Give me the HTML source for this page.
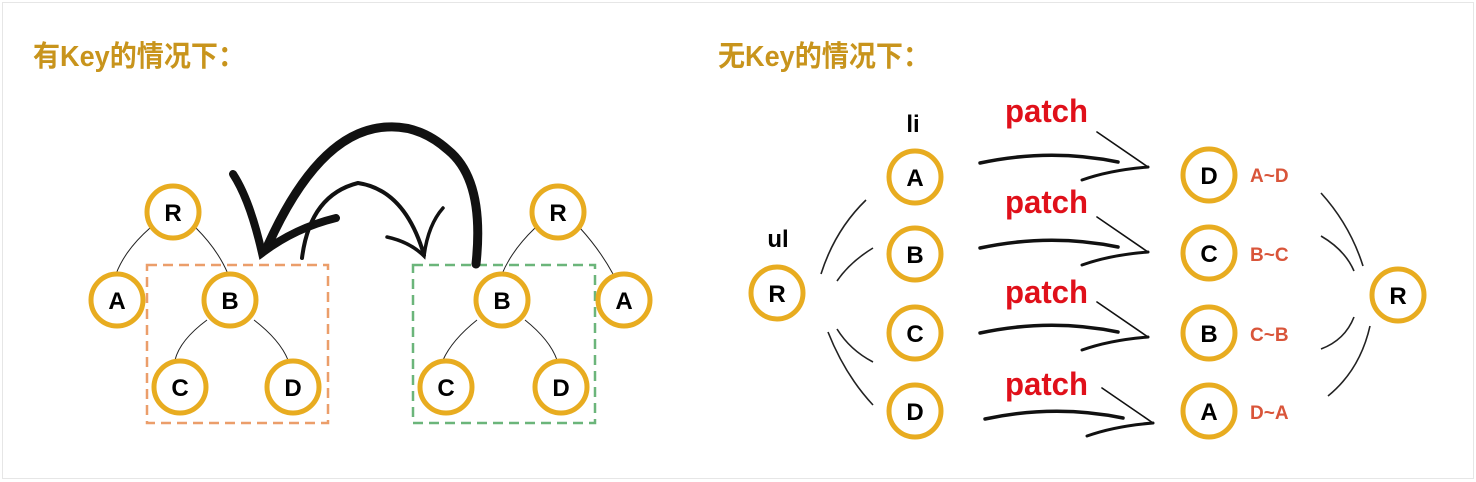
<!DOCTYPE html>
<html><head><meta charset="utf-8"><style>
html,body{margin:0;padding:0;background:#fff;}
body{width:1476px;height:482px;overflow:hidden;font-family:"Liberation Sans","Noto Sans CJK SC",sans-serif;}
svg{display:block}
</style></head><body>
<svg width="1476" height="482" viewBox="0 0 1476 482" xmlns="http://www.w3.org/2000/svg" font-family="Liberation Sans, Noto Sans CJK SC, sans-serif">
<rect x="2.5" y="2.5" width="1471" height="476" fill="#fff" stroke="#e6e6e6" stroke-width="1"/>
<text x="33" y="66" font-size="29" font-weight="bold" fill="#c8941c" textLength="212" lengthAdjust="spacingAndGlyphs">有Key的情况下：</text>
<text x="718" y="66" font-size="29" font-weight="bold" fill="#c8941c" textLength="212" lengthAdjust="spacingAndGlyphs">无Key的情况下：</text>

<g fill="none" stroke="#222" stroke-width="1">
<path d="M150,228 Q125,250 116,274"/><path d="M196,228 Q218,250 228,274"/>
<path d="M207,320 Q180,340 175,360"/><path d="M254,320 Q280,340 288,360"/>
<path d="M535,228 Q512,250 502,274"/><path d="M580,228 Q600,250 613,274"/>
<path d="M477,320 Q452,340 443,360"/><path d="M525,320 Q550,340 557,360"/>
</g>
<rect x="147" y="265" width="181" height="158" fill="none" stroke="#eb9e6a" stroke-width="2.5" stroke-dasharray="10,6"/>
<rect x="413" y="265" width="182" height="158" fill="none" stroke="#6bb57a" stroke-width="2.5" stroke-dasharray="10,6"/>

<g fill="none" stroke="#111" stroke-linecap="round">
<path d="M476,264 Q485,180 448,150 Q420,125 387,127 Q320,130 268,245" stroke-width="9"/>
<path d="M233,174 Q250,200 262,253 Q295,228 336,218" stroke-width="8"/>
<path d="M302,258 Q310,195 358,183 Q405,190 424,255" stroke-width="4"/>
<path d="M387,237 Q410,242 424,256 Q428,225 443,208" stroke-width="3.5"/>
</g>

<g fill="#fff" stroke="#e8ac20" stroke-width="5">
<circle cx="173" cy="212" r="26"/><circle cx="117" cy="300" r="26"/><circle cx="230" cy="300" r="26"/>
<circle cx="180" cy="387" r="26"/><circle cx="293" cy="387" r="26"/>
<circle cx="558" cy="212" r="26"/><circle cx="502" cy="300" r="26"/><circle cx="624" cy="300" r="26"/>
<circle cx="446" cy="387" r="26"/><circle cx="561" cy="387" r="26"/>
<circle cx="777" cy="293" r="26"/>
<circle cx="915" cy="177" r="26"/><circle cx="915" cy="254" r="26"/><circle cx="915" cy="333" r="26"/><circle cx="915" cy="411" r="26"/>
<circle cx="1209" cy="175" r="26"/><circle cx="1209" cy="253" r="26"/><circle cx="1209" cy="333" r="26"/><circle cx="1209" cy="411" r="26"/>
<circle cx="1398" cy="295" r="26"/>
</g>
<g font-size="24" font-weight="bold" fill="#000" text-anchor="middle">
<text x="173" y="221">R</text><text x="117" y="309">A</text><text x="230" y="309">B</text><text x="180" y="396">C</text><text x="293" y="396">D</text>
<text x="558" y="221">R</text><text x="502" y="309">B</text><text x="624" y="309">A</text><text x="446" y="396">C</text><text x="561" y="396">D</text>
<text x="777" y="302">R</text>
<text x="915" y="186">A</text><text x="915" y="263">B</text><text x="915" y="342">C</text><text x="915" y="420">D</text>
<text x="1209" y="184">D</text><text x="1209" y="262">C</text><text x="1209" y="342">B</text><text x="1209" y="420">A</text>
<text x="1398" y="304">R</text>
<text x="778" y="247">ul</text><text x="913" y="132">li</text>
</g>
<g font-size="32" font-weight="bold" fill="#e0101a">
<text x="1005" y="122" textLength="83" lengthAdjust="spacingAndGlyphs">patch</text>
<text x="1005" y="213" textLength="83" lengthAdjust="spacingAndGlyphs">patch</text>
<text x="1005" y="303" textLength="83" lengthAdjust="spacingAndGlyphs">patch</text>
<text x="1005" y="395" textLength="83" lengthAdjust="spacingAndGlyphs">patch</text>
</g>
<g font-size="19" font-weight="bold" fill="#d9553a">
<text x="1250" y="182">A~D</text><text x="1250" y="261">B~C</text><text x="1250" y="341">C~B</text><text x="1250" y="419">D~A</text>
</g>
<g fill="none" stroke="#222" stroke-width="1.6">
<path d="M821,274 Q835,230 866,200"/><path d="M837,281 Q850,262 873,248"/>
<path d="M837,329 Q850,350 873,362"/><path d="M828,332 Q845,375 873,405"/>
<path d="M1321,193 Q1350,225 1363,266"/><path d="M1321,236 Q1345,250 1354,271"/>
<path d="M1354,317 Q1345,340 1321,349"/><path d="M1370,326 Q1360,370 1328,396"/>
</g>
<g fill="none" stroke="#111" stroke-linecap="round">
<g id="ar">
<path d="M980,163 Q1050,148 1118,162" stroke-width="3.5"/>
<path d="M1097,132 L1148,167" stroke-width="1.6"/>
<path d="M1082,180 Q1110,170 1148,167" stroke-width="3"/>
</g>
<use href="#ar" y="85"/><use href="#ar" y="170"/><use href="#ar" x="5" y="256"/>
</g>
</svg>
</body></html>
